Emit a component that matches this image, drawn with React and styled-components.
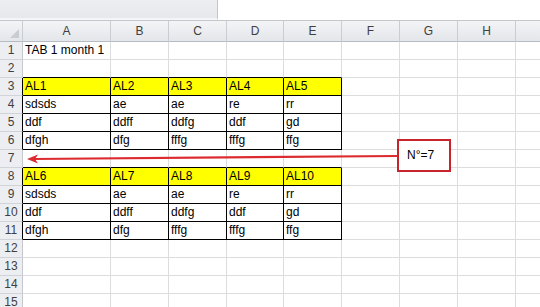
import styled, { createGlobalStyle } from "styled-components";

const GlobalStyle = createGlobalStyle`
  html, body {
    margin: 0;
    padding: 0;
    background: #ffffff;
    overflow: hidden;
  }
  body {
    font-family: "Liberation Sans", Arial, sans-serif;
  }
`;

// last column is only partly in view, its letter falls outside the window
const COLS = ["A", "B", "C", "D", "E", "F", "G", "H", ""];
const ROW_COUNT = 15;

const yellowRows = [3, 8];
const boxedRows = [3, 4, 5, 6, 8, 9, 10, 11];
const boxedCols = [0, 1, 2, 3, 4];

const data = {
  1: ["TAB 1 month 1"],
  3: ["AL1", "AL2", "AL3", "AL4", "AL5"],
  4: ["sdsds", "ae", "ae", "re", "rr"],
  5: ["ddf", "ddff", "ddfg", "ddf", "gd"],
  6: ["dfgh", "dfg", "fffg", "fffg", "ffg"],
  8: ["AL6", "AL7", "AL8", "AL9", "AL10"],
  9: ["sdsds", "ae", "ae", "re", "rr"],
  10: ["ddf", "ddff", "ddfg", "ddf", "gd"],
  11: ["dfgh", "dfg", "fffg", "fffg", "ffg"],
};

const isBoxed = (r, c) => boxedRows.includes(r) && boxedCols.includes(c);

const Page = styled.div`
  position: relative;
  width: 540px;
  height: 307px;
  overflow: hidden;
`;

const TopBar = styled.div`
  display: flex;
  height: 20px;
  border-bottom: 1px solid #c4c8cd;
`;

const NameArea = styled.div`
  width: 218px;
  background: linear-gradient(#eceef1, #e6e8eb);
  border-right: 1px solid #c2c5c9;
  border-bottom: 2px solid #f4f5f6;
  box-sizing: border-box;
`;

const FormulaArea = styled.div`
  flex: 1;
  background: #ffffff;
`;

const Sheet = styled.div`
  display: grid;
  width: 574px;
  grid-template-columns: 23px 88px 58px 58px 57px 58px 58px 58px 58px 58px;
  grid-template-rows: 21px;
  grid-auto-rows: 18px;
`;

const HeadCell = styled.div`
  box-sizing: border-box;
  display: flex;
  align-items: center;
  justify-content: center;
  background: linear-gradient(#f3f4f6, #e3e6ea);
  border-right: 1px solid #c9cdd2;
  border-bottom: 1px solid #b7bcc2;
  font-size: 12px;
  color: #3f3f3f;
`;

const Corner = styled(HeadCell)`
  position: relative;
  &::after {
    content: "";
    position: absolute;
    right: 3px;
    bottom: 3px;
    width: 0;
    height: 0;
    border-left: 9px solid transparent;
    border-bottom: 9px solid #c9ccd0;
  }
`;

const RowHead = styled.div`
  box-sizing: border-box;
  display: flex;
  align-items: flex-end;
  justify-content: center;
  padding-bottom: 2px;
  background: #eceef1;
  border-right: 1px solid ${(p) => (p.$dark ? "#000" : "#c5c9ce")};
  border-bottom: 1px solid #d0d3d7;
  font-size: 12px;
  color: #3f3f3f;
`;

const Cell = styled.div`
  box-sizing: border-box;
  display: flex;
  align-items: flex-end;
  padding: 0 0 2px 2px;
  white-space: nowrap;
  overflow: visible;
  background: ${(p) => (p.$yellow ? "#ffff00" : "#ffffff")};
  border-right: 1px solid ${(p) => (p.$darkRight ? "#000" : "#dadcdd")};
  border-bottom: 1px solid ${(p) => (p.$darkBottom ? "#000" : "#dadcdd")};
  font-size: 12px;
  color: #000;
  line-height: 14px;
`;

const Callout = styled.div`
  position: absolute;
  left: 397px;
  top: 139px;
  width: 54px;
  height: 33px;
  box-sizing: border-box;
  border: 2px solid #c8242c;
  background: #ffffff;
  padding: 7px 0 0 8px;
  font-size: 12px;
  line-height: 14px;
  color: #000;
`;

const Overlay = styled.svg`
  position: absolute;
  left: 0;
  top: 0;
  pointer-events: none;
`;

export default function App() {
  const rows = Array.from({ length: ROW_COUNT }, (_, i) => i + 1);
  return (
    <Page>
      <GlobalStyle />
      <TopBar>
        <NameArea />
        <FormulaArea />
      </TopBar>
      <Sheet>
        <Corner />
        {COLS.map((c, ci) => (
          <HeadCell key={`col${ci}`}>{c}</HeadCell>
        ))}
        {rows.map((r) => [
          <RowHead key={`h${r}`} $dark={isBoxed(r, 0)}>
            {r}
          </RowHead>,
          ...COLS.map((c, ci) => (
            <Cell
              key={`${r}-${ci}`}
              $yellow={yellowRows.includes(r) && ci < 5}
              $darkRight={isBoxed(r, ci) || isBoxed(r, ci + 1)}
              $darkBottom={isBoxed(r, ci) || isBoxed(r + 1, ci)}
            >
              {(data[r] && data[r][ci]) || ""}
            </Cell>
          )),
        ])}
      </Sheet>
      <Overlay width="540" height="307" viewBox="0 0 540 307">
        <line x1="398" y1="156" x2="33" y2="159" stroke="#dc2a2e" strokeWidth="2.2" />
        <polygon points="27,159 38,154.5 35,159 38,163.5" fill="#dc2a2e" />
      </Overlay>
      <Callout>N°=7</Callout>
    </Page>
  );
}
